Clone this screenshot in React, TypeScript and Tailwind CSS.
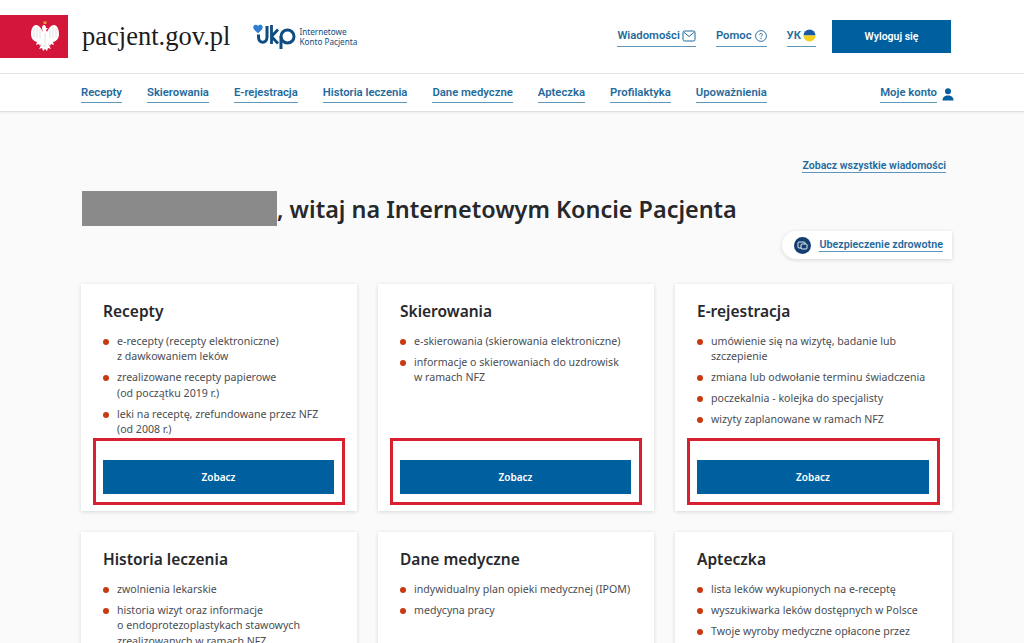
import React from "react";

const BLUE = "text-[#1f6a9c]";

function Eagle() {
  return (
    <svg width="28" height="31" viewBox="0 0 28 31">
      <path d="M12.800 3l-.5-3 1 1 .7-1 .7 1 1-1-.5 3z" fill="#e8a53c" />
      <path d="M12 11C10 7 8 4 5 4 2 4 0 8 0 13c0 4 2 7 6 8l-1 3 3-1 1 2 2-3-3 6 3-1 1 3 2-2 2 2 1-3 3 1-3-6 2 3 1-2 3 1-1-3c4-1 6-4 6-8 0-5-2-9-5-9-3 0-5 3-7 7l-1-2c1-1 1.500-1 2-1.500-1-.5-1.500-.5-2-.5 0-2-1-3-2-3s-2 1-2 3c0 1 .5 2 1 3.500z" fill="#fff" />
      <path d="M3 7v9M6 6v11M9 8v9M25 7v9M22 6v11M19 8v9M12 25h4M14 12v12" stroke="#d9d9d9" strokeWidth="0.8" fill="none" />
    </svg>
  );
}

function IkpLogo() {
  return (
    <svg width="44" height="27" viewBox="0 0 44 27">
      <path d="M.5 3.200c1-2 3.500-1.800 4.500-.2 1-1.600 3.500-1.800 4.500.2.900 2-.8 4-4.500 7C1.300 7.200-.4 5.200.5 3.200z" fill="#2f7fd1" />
      <path d="M5.500 11.500v2.500c0 7 8.500 7 8.500 0V3" stroke="#0f4c81" strokeWidth="3" fill="none" />
      <path d="M18.500 2v19M18.500 13.500l6.500-7M18.500 13.500l6.500 7" stroke="#0f4c81" strokeWidth="2.800" fill="none" />
      <circle cx="34.500" cy="13.500" r="6.500" stroke="#0f4c81" strokeWidth="3" fill="none" />
      <path d="M28 13.500V26" stroke="#0f4c81" strokeWidth="3" fill="none" />
    </svg>
  );
}

function TopLink({ children, icon }: { children: React.ReactNode; icon?: React.ReactNode }) {
  return (
    <a className={`flex items-center gap-[2px] border-b border-[#5d95bb] pb-[2px] font-['Roboto',sans-serif] text-[11.3px] leading-[16px] font-semibold ${BLUE}`}>
      {children}
      {icon}
    </a>
  );
}

function NavLink({ children }: { children: React.ReactNode }) {
  return (
    <a className={`border-b border-[#5d95bb] pb-[1px] font-['Roboto',sans-serif] text-[11.3px] leading-[16px] font-semibold whitespace-nowrap ${BLUE}`}>
      {children}
    </a>
  );
}

function Card({
  title,
  items,
  button,
  tall,
}: {
  title: string;
  items: React.ReactNode[];
  button?: boolean;
  tall?: boolean;
}) {
  return (
    <div className={`relative flex flex-col bg-white pt-[17px] pr-[22px] pl-[22px] shadow-[0_1px_4px_rgba(0,0,0,0.14)] ${tall ? "h-[227px]" : "h-[140px]"}`}>
      <h2 className="text-[15.5px] leading-[20px] font-semibold text-[#26282b]">{title}</h2>
      <ul className="mt-[12.5px] flex flex-col gap-[5.5px]">
        {items.map((it, i) => (
          <li key={i} className="relative pl-[14px] text-[10.6px] leading-[15.5px] text-[#4a4d52]">
            <span className="absolute top-[5px] left-0 h-[6px] w-[6px] rounded-full bg-[#c93a12]" />
            {it}
          </li>
        ))}
      </ul>
      {button && (
        <>
          <div className="absolute right-[23px] bottom-[17px] left-[22px] flex h-[34px] items-center justify-center bg-[#005f9f] text-[10px] font-semibold text-white">
            Zobacz
          </div>
          <div className="absolute right-[12px] bottom-[6px] left-[12px] h-[67px] border-[3px] border-[#d9202f]" />
        </>
      )}
    </div>
  );
}

export default function App() {
  return (
    <div className="h-[643px] w-[1024px] overflow-hidden bg-[#fafafa] font-['Noto_Sans',sans-serif]">
      <header className="flex h-[74px] items-center border-b border-[#e6e6e6] bg-white pr-[73px]">
        <div className="mb-[1px] flex h-[43px] w-[68px] items-center justify-center bg-[#d4163a] pl-[22px]">
          <Eagle />
        </div>
        <div className="mb-[2px] ml-[14px] font-['Liberation_Serif',serif] text-[26.500px] leading-[30px] text-[#1c1c1c]">pacjent.gov.pl</div>
        <div className="ml-[23px] flex items-center gap-[2px]">
          <IkpLogo />
          <div className="text-[8.2px] leading-[10px] text-[#0f4c81]">
            Internetowe
            <br />
            Konto Pacjenta
          </div>
        </div>
        <div className="mt-[1px] ml-auto flex items-center">
          <TopLink
            icon={
              <svg width="14" height="12" viewBox="0 0 14 12" fill="none" stroke="#1f6a9c" strokeWidth="1">
                <rect x="1" y="1" width="12" height="10" rx="1.5" />
                <path d="M1.500 2l5.500 4.500L12.500 2" />
              </svg>
            }
          >
            Wiadomości
          </TopLink>
          <div className="ml-[20px]">
            <TopLink
              icon={
                <svg width="12" height="12" viewBox="0 0 12 12" fill="none" stroke="#1f6a9c" strokeWidth="0.9" className="ml-[1px]">
                  <circle cx="6" cy="6" r="5.400" />
                  <path d="M4.600 4.800a1.400 1.400 0 1 1 2 1.300c-.4.2-.6.5-.6 1" />
                  <circle cx="6" cy="8.600" r="0.3" />
                </svg>
              }
            >
              Pomoc
            </TopLink>
          </div>
          <div className="ml-[20px]">
            <TopLink
              icon={
                <svg width="13" height="13" viewBox="0 0 13 13">
                  <path d="M0.500 6.500a6 6 0 0 1 12 0z" fill="#1d5aa6" />
                  <path d="M0.500 6.500a6 6 0 0 0 12 0z" fill="#f6cf1e" />
                </svg>
              }
            >
              УК
            </TopLink>
          </div>
          <div className="mb-[1px] ml-[16px] flex h-[33px] w-[119px] items-center justify-center bg-[#005f9f] font-['Roboto',sans-serif] text-[10.5px] font-semibold text-white">
            Wyloguj się
          </div>
        </div>
      </header>

      <nav className="flex h-[38px] items-center border-b border-[#e0e0e0] bg-white pt-[3px] pr-[70px] pl-[81px] shadow-[0_1px_2px_rgba(0,0,0,0.05)]">
        <div className="flex gap-[25px]">
          {["Recepty", "Skierowania", "E-rejestracja", "Historia leczenia", "Dane medyczne", "Apteczka", "Profilaktyka", "Upoważnienia"].map((t) => (
            <NavLink key={t}>{t}</NavLink>
          ))}
        </div>
        <div className="ml-auto flex items-center gap-[5px]">
          <NavLink>Moje konto</NavLink>
          <svg width="12" height="13" viewBox="0 0 12 13" fill="#005f9f">
            <circle cx="6" cy="3.200" r="3" />
            <path d="M0.500 12.500c0-3.200 2.200-5 5.500-5s5.500 1.800 5.500 5z" />
          </svg>
        </div>
      </nav>

      <main className="pr-[72px] pl-[81px]">
        <div className="flex justify-end pt-[47px] pr-[6px]">
          <a className={`border-b border-[#5d95bb] font-['Roboto',sans-serif] text-[10.55px] leading-[13px] font-semibold ${BLUE}`}>Zobacz wszystkie wiadomości</a>
        </div>
        <div className="relative mt-[18px] flex h-[35px] items-center">
          <div className="ml-[1px] h-[35px] w-[195px] bg-[#8a8a8a]" />
          <h1 className="text-[23.400px] leading-[30px] font-semibold text-[#26282b]">, witaj na Internetowym Koncie Pacjenta</h1>
        </div>
        <div className="mt-[5px] flex justify-end">
          <div className="flex h-[28px] items-center gap-[8px] rounded-l-full bg-white pr-[9px] pl-[12px] shadow-[0_1px_4px_rgba(0,0,0,0.14)]">
            <svg width="17" height="17" viewBox="0 0 17 17">
              <circle cx="8.500" cy="8.500" r="8.500" fill="#123e72" />
              <rect x="4" y="5" width="7" height="6" rx="1" fill="none" stroke="#fff" strokeWidth="0.9" />
              <rect x="7" y="7" width="6" height="5" rx="1" fill="#123e72" stroke="#fff" strokeWidth="0.9" />
            </svg>
            <a className={`border-b border-[#5d95bb] font-['Roboto',sans-serif] text-[10.75px] leading-[13px] font-semibold ${BLUE}`}>Ubezpieczenie zdrowotne</a>
          </div>
        </div>
        <div className="mt-[25px] grid grid-cols-[276px_276px_277px] gap-x-[21px] gap-y-[21px]">
          <Card
            tall
            button
            title="Recepty"
            items={[
              <>e-recepty (recepty elektroniczne)<br />z dawkowaniem leków</>,
              <>zrealizowane recepty papierowe<br />(od początku 2019 r.)</>,
              <>leki na receptę, zrefundowane przez NFZ<br />(od 2008 r.)</>,
            ]}
          />
          <Card
            tall
            button
            title="Skierowania"
            items={[
              "e-skierowania (skierowania elektroniczne)",
              <>informacje o skierowaniach do uzdrowisk<br />w ramach NFZ</>,
            ]}
          />
          <Card
            tall
            button
            title="E-rejestracja"
            items={[
              <>umówienie się na wizytę, badanie lub<br />szczepienie</>,
              "zmiana lub odwołanie terminu świadczenia",
              "poczekalnia - kolejka do specjalisty",
              "wizyty zaplanowane w ramach NFZ",
            ]}
          />
          <Card
            title="Historia leczenia"
            items={[
              "zwolnienia lekarskie",
              <>historia wizyt oraz informacje<br />o endoprotezoplastykach stawowych<br />zrealizowanych w ramach NFZ</>,
            ]}
          />
          <Card
            title="Dane medyczne"
            items={["indywidualny plan opieki medycznej (IPOM)", "medycyna pracy"]}
          />
          <Card
            title="Apteczka"
            items={[
              "lista leków wykupionych na e-receptę",
              "wyszukiwarka leków dostępnych w Polsce",
              "Twoje wyroby medyczne opłacone przez",
            ]}
          />
        </div>
      </main>
    </div>
  );
}
